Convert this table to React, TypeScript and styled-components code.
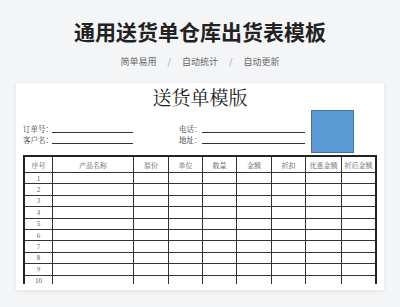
import React from "react";
import styled, { createGlobalStyle } from "styled-components";

const GlobalStyle = createGlobalStyle`
  html, body { margin: 0; padding: 0; background: #f4f5f7; }
  body { font-family: "Noto Sans CJK SC", "Noto Sans", sans-serif; }
  * { box-sizing: border-box; }
`;

const SERIF = `"Noto Serif CJK SC", "Liberation Serif", "Noto Sans CJK SC", serif`;

const Page = styled.div`
  width: 400px;
  height: 307px;
  overflow: hidden;
  padding: 16px 16px 0;
  display: flex;
  flex-direction: column;
  align-items: center;
`;

const Title = styled.h1`
  margin: 0;
  height: 30px;
  line-height: 30px;
  font-size: 21px;
  font-weight: 700;
  color: #222;
  letter-spacing: 0;
`;

const Subtitle = styled.div`
  margin-top: 9px;
  height: 14px;
  display: flex;
  align-items: center;
  gap: 11px;
  font-size: 9px;
  line-height: 14px;
  color: #666;
`;

const Sep = styled.span`
  color: #999;
`;

const Card = styled.div`
  margin-top: 14px;
  width: 368px;
  height: 207px;
  background: #fff;
  box-shadow: 0 1px 5px rgba(0, 0, 0, 0.08);
  padding: 1px 7px 6px;
  display: flex;
  flex-direction: column;
`;

const DocTitle = styled.div`
  height: 26px;
  line-height: 26px;
  text-align: center;
  font-family: ${SERIF};
  font-size: 19px;
  color: #222;
`;

const InfoArea = styled.div`
  height: 43px;
  display: flex;
  align-items: flex-end;
`;

const FieldGroup = styled.div<{ $gapLeft?: number }>`
  display: flex;
  flex-direction: column;
  margin-bottom: 8px;
  margin-left: ${(p) => p.$gapLeft ?? 0}px;
`;

const FieldRow = styled.div`
  height: 11px;
  display: flex;
  align-items: flex-end;
`;

const Label = styled.span<{ $w: number }>`
  width: ${(p) => p.$w}px;
  height: 11px;
  line-height: 11px;
  font-family: ${SERIF};
  font-size: 7.5px;
  color: #333;
  white-space: nowrap;
`;

const Blank = styled.span<{ $w: number }>`
  width: ${(p) => p.$w}px;
  border-bottom: 1px solid #333;
  margin-bottom: 1px;
`;

const Photo = styled.div`
  width: 43px;
  height: 43px;
  margin-left: 6px;
  background: #5b9bd5;
  border: 1px solid #41719c;
  align-self: flex-start;
`;

const TableFrame = styled.div`
  margin-top: 2px;
  height: 129px;
  overflow: hidden;
  border: 2px solid #222;
  border-bottom: none;
`;

const Grid = styled.div`
  display: grid;
  grid-template-columns: 28px 81px 35px 34px 34px 35px 34px 36px 33px;
  grid-template-rows: 16px;
  grid-auto-rows: 11.4px;
`;

const Cell = styled.div<{ $last?: boolean; $head?: boolean }>`
  border-right: ${(p) => (p.$last ? "none" : "1px solid #333")};
  border-bottom: 1px solid #333;
  display: flex;
  align-items: center;
  justify-content: center;
  font-family: ${SERIF};
  font-size: ${(p) => (p.$head ? "7px" : "6.5px")};
  color: ${(p) => (p.$head ? "#555" : "#444")};
  white-space: nowrap;
  overflow: hidden;
`;

const headers = ["序号", "产品名称", "原价", "单位", "数量", "金额", "折扣", "优惠金额", "折后金额"];
const rows = Array.from({ length: 10 }, (_, i) => i + 1);

export default function App() {
  return (
    <>
      <GlobalStyle />
      <Page>
        <Title>通用送货单仓库出货表模板</Title>
        <Subtitle>
          <span>简单易用</span>
          <Sep>/</Sep>
          <span>自动统计</span>
          <Sep>/</Sep>
          <span>自动更新</span>
        </Subtitle>
        <Card>
          <DocTitle>送货单模版</DocTitle>
          <InfoArea>
            <FieldGroup>
              <FieldRow>
                <Label $w={29}>订单号：</Label>
                <Blank $w={81} />
              </FieldRow>
              <FieldRow>
                <Label $w={29}>客户名：</Label>
                <Blank $w={81} />
              </FieldRow>
            </FieldGroup>
            <FieldGroup $gapLeft={46}>
              <FieldRow>
                <Label $w={23}>电话：</Label>
                <Blank $w={103} />
              </FieldRow>
              <FieldRow>
                <Label $w={23}>地址：</Label>
                <Blank $w={103} />
              </FieldRow>
            </FieldGroup>
            <Photo />
          </InfoArea>
          <TableFrame>
            <Grid>
              {headers.map((h, i) => (
                <Cell key={h} $head $last={i === headers.length - 1}>
                  {h}
                </Cell>
              ))}
              {rows.map((r) =>
                headers.map((h, i) => (
                  <Cell key={`${r}-${h}`} $last={i === headers.length - 1}>
                    {i === 0 ? r : ""}
                  </Cell>
                ))
              )}
            </Grid>
          </TableFrame>
        </Card>
      </Page>
    </>
  );
}
